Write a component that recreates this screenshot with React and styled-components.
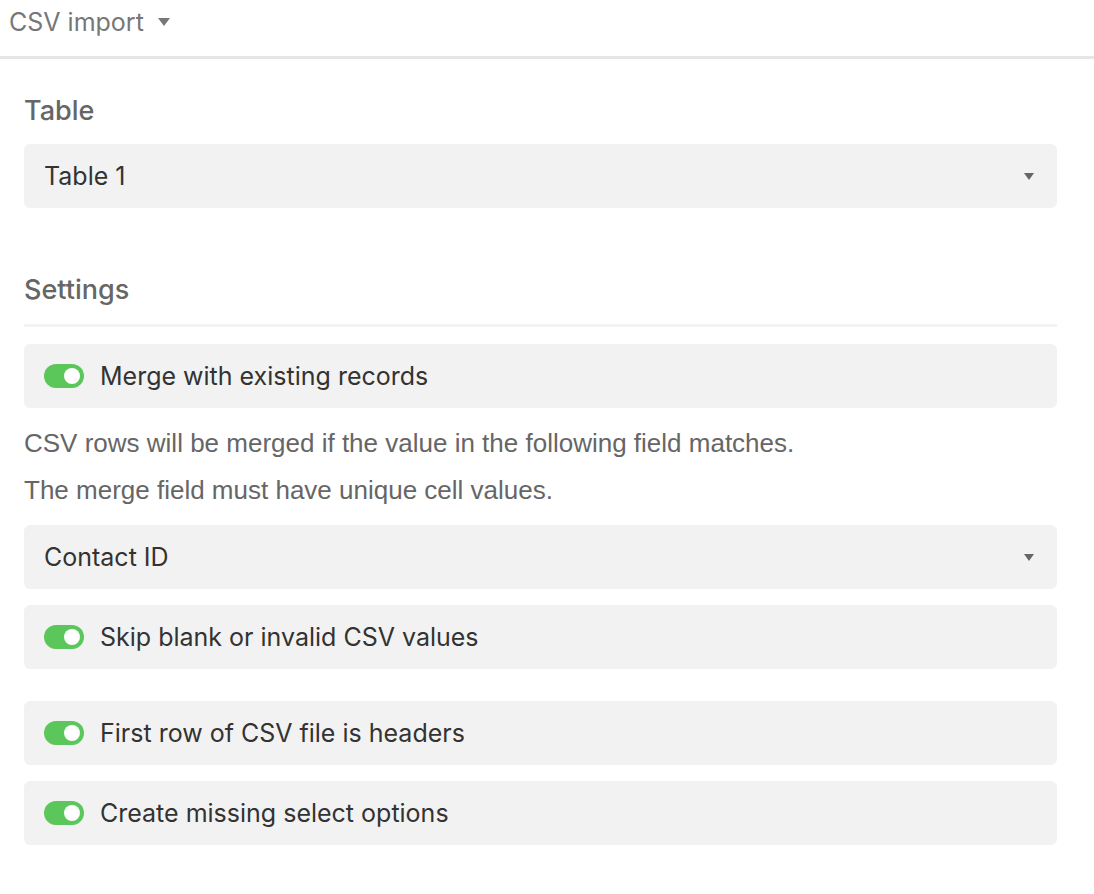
import React from 'react';
import styled, { createGlobalStyle } from 'styled-components';

const GlobalStyle = createGlobalStyle`
  body {
    margin: 0;
    background: #fff;
    font-family: Inter, "Noto Sans", sans-serif;
  }
`;

const TopBar = styled.div`
  height: 59px;
  box-sizing: border-box;
  padding: 0 9px 13px;
  display: flex;
  align-items: center;
  gap: 14px;
  border-bottom: 3px solid #e6e6e6;
  color: #777;
  font-size: 25px;
`;

const Caret = styled.span`
  width: 0;
  height: 0;
  border-left: ${({ big }) => (big ? 6 : 5)}px solid transparent;
  border-right: ${({ big }) => (big ? 6 : 5)}px solid transparent;
  border-top: ${({ big }) => (big ? 8 : 7)}px solid ${({ dark }) => (dark ? '#666' : '#777')};
`;

const Content = styled.div`
  padding: 36px 37px 40px 24px;
`;

const Title = styled.div`
  font-size: 27px;
  line-height: 32px;
  font-weight: 500;
  color: #666;
  margin-top: ${({ top }) => top || 0}px;
`;

const Divider = styled.div`
  height: 3px;
  background: #f3f3f3;
  margin-top: 18px;
`;

const Box = styled.div`
  height: 64px;
  box-sizing: border-box;
  background: #f2f2f2;
  border-radius: 6px;
  display: flex;
  align-items: center;
  padding: 0 23px 0 20px;
  margin-top: ${({ top }) => top || 0}px;
  color: #333;
  font-size: 25px;
`;

const SelectText = styled.span`
  flex: 1;
`;

const Toggle = styled.span`
  width: 40px;
  height: 24px;
  border-radius: 12px;
  background: #5bc65a;
  position: relative;
  margin-right: 16px;
  flex-shrink: 0;
  &::after {
    content: '';
    position: absolute;
    right: 4px;
    top: 4px;
    width: 16px;
    height: 16px;
    border-radius: 50%;
    background: #fff;
  }
`;

const Note = styled.div`
  font-family: "Liberation Sans", Arial, sans-serif;
  font-size: 26px;
  line-height: 47px;
  color: #666;
  margin-top: ${({ top }) => top || 0}px;
`;

function Select({ value, top }) {
  return (
    <Box top={top}>
      <SelectText>{value}</SelectText>
      <Caret dark />
    </Box>
  );
}

function Switch({ label, top }) {
  return (
    <Box top={top}>
      <Toggle />
      <span>{label}</span>
    </Box>
  );
}

export default function App() {
  return (
    <>
      <GlobalStyle />
      <TopBar>
        <span>CSV import</span>
        <Caret big />
      </TopBar>
      <Content>
        <Title>Table</Title>
        <Select value="Table 1" top={17} />
        <Title top={66}>Settings</Title>
        <Divider />
        <Switch label="Merge with existing records" top={17} />
        <Note top={12}>
          CSV rows will be merged if the value in the following field matches.
          <br />
          The merge field must have unique cell values.
        </Note>
        <Select value="Contact ID" top={11} />
        <Switch label="Skip blank or invalid CSV values" top={16} />
        <Switch label="First row of CSV file is headers" top={32} />
        <Switch label="Create missing select options" top={16} />
      </Content>
    </>
  );
}
